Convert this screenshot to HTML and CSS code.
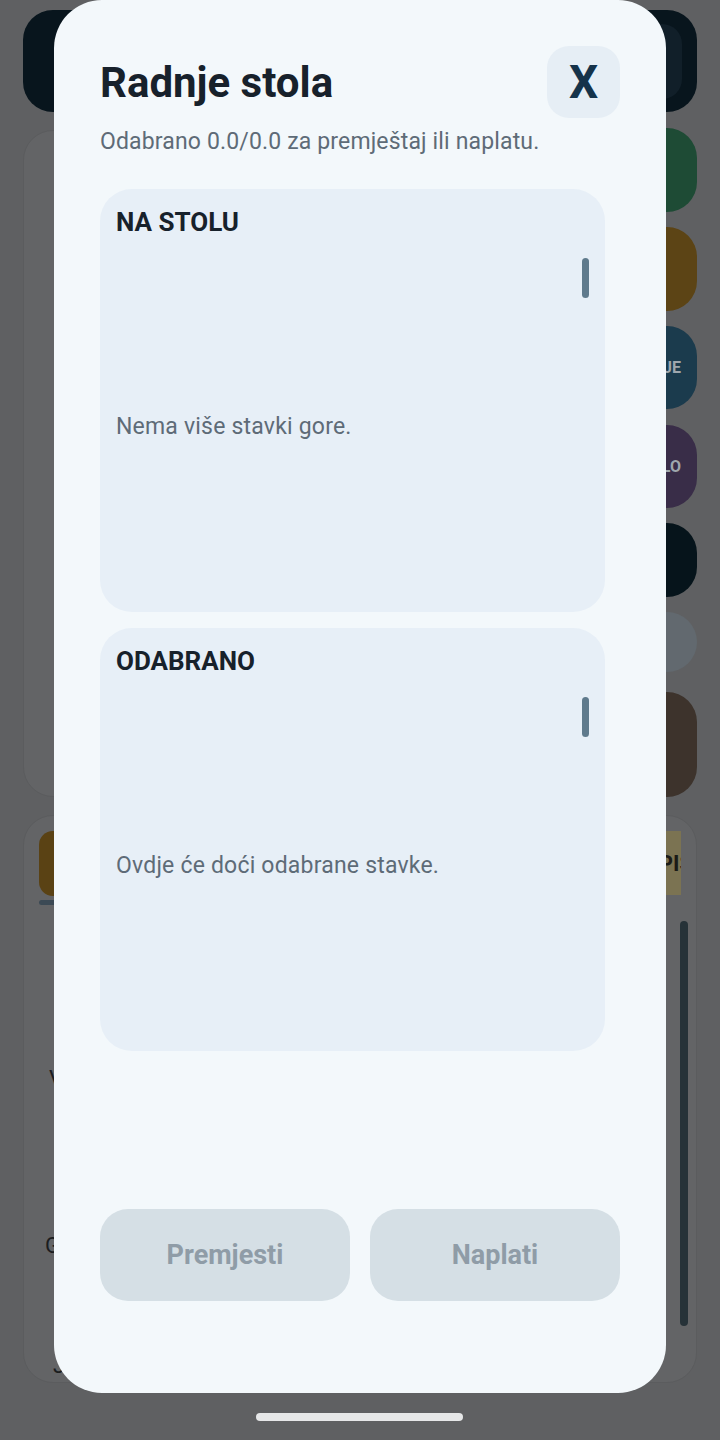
FILE: index.html
```html
<!DOCTYPE html>
<html lang="hr">
<head>
  <meta charset="UTF-8">
  <meta name="viewport" content="width=device-width, initial-scale=1.0">
  <title>Radnje stola</title>
  <link rel="stylesheet" href="styles.css">
</head>
<body>
  <div class="app">
    <div class="topbar">
      <span class="topbar-title">Stol 4</span>
      <div class="topbar-btn"></div>
    </div>

    <div class="main">
      <div class="table-card"></div>
      <div class="actions">
        <div class="action green"></div>
        <div class="action amber"></div>
        <div class="action blue"><span>SPAJANJE</span></div>
        <div class="action purple"><span>NOVI STOLO</span></div>
        <div class="action dark short"></div>
        <div class="action round"></div>
        <div class="action brown tall"></div>
      </div>
    </div>

    <div class="order-card">
      <div class="tabs">
        <div class="tab-active"></div>
        <div class="tab-print"><span>ISPIS</span></div>
      </div>
      <div class="tab-line"></div>
      <div class="rows">
        <div class="row r1">Voda 0.5</div>
        <div class="row r2">Gemišt</div>
        <div class="row r3">Jana</div>
      </div>
      <div class="order-scroll"></div>
    </div>
  </div>

  <div class="sheet">
    <div class="sheet-head">
      <h1>Radnje stola</h1>
      <button class="close-btn">X</button>
    </div>
    <p class="sheet-sub">Odabrano 0.0/0.0 za premještaj ili naplatu.</p>

    <div class="panel">
      <div class="panel-title">NA STOLU</div>
      <div class="panel-body">
        <div class="thumb"></div>
        <span class="empty">Nema više stavki gore.</span>
      </div>
    </div>

    <div class="panel">
      <div class="panel-title">ODABRANO</div>
      <div class="panel-body">
        <div class="thumb"></div>
        <span class="empty">Ovdje će doći odabrane stavke.</span>
      </div>
    </div>

    <div class="sheet-actions">
      <button class="sheet-btn" disabled>Premjesti</button>
      <button class="sheet-btn" disabled>Naplati</button>
    </div>
  </div>

  <div class="nav-pill"></div>
</body>
</html>
```

FILE: styles.css
```css
body {
  margin: 0;
  width: 720px;
  height: 1440px;
  overflow: hidden;
  position: relative;
  background: #5f6062;
  font-family: Roboto, 'Noto Sans', sans-serif;
}

/* app under the dimmed backdrop */
.app {
  padding: 10px 23px 0;
}

.topbar {
  height: 102px;
  border-radius: 30px;
  background: #08151d;
  display: flex;
  align-items: center;
  justify-content: space-between;
  padding: 0 15px 0 32px;
}

.topbar-title {
  color: #1c2a33;
  font-size: 26px;
  font-weight: 700;
}

.topbar-btn {
  width: 40px;
  height: 75px;
  border-radius: 20px;
  background: #111f29;
}

.main {
  display: flex;
  gap: 15px;
  margin-top: 16px;
}

.table-card {
  flex: 1;
  height: 665px;
  margin-top: 2px;
  border-radius: 30px;
  background: #636466;
  border: 1px solid #5b5c5e;
}

.actions {
  width: 130px;
  display: flex;
  flex-direction: column;
  gap: 15px;
}

.action {
  height: 84px;
  border-radius: 30px;
  display: flex;
  align-items: center;
  justify-content: flex-end;
  padding-right: 16px;
  overflow: hidden;
  white-space: nowrap;
  color: #9fa7ad;
  font-size: 16px;
  font-weight: 700;
}

.green { background: #1e4b35; }
.amber { background: #5c4415; }
.blue { background: #1b3b4d; height: 83px; }
.purple { background: #392d48; height: 83px; margin-top: 1px; }
.dark { background: #06141b; }
.short { height: 74px; }
.round {
  width: 60px;
  height: 60px;
  padding: 0;
  align-self: flex-end;
  border-radius: 50%;
  background: #62696f;
}
.brown { background: #3d332c; margin-top: 5px; }
.tall { height: 105px; }

.order-card {
  position: relative;
  height: 568px;
  box-sizing: border-box;
  margin-top: 18px;
  padding: 15px;
  border-radius: 30px;
  background: #636466;
  border: 1px solid #5b5c5e;
}

.tabs {
  display: flex;
  justify-content: space-between;
}

.tab-active {
  width: 200px;
  height: 65px;
  border-radius: 14px;
  background: #5a4214;
}

.tab-print {
  width: 110px;
  height: 64px;
  background: #7b7352;
  display: flex;
  align-items: center;
  justify-content: flex-end;
  overflow: hidden;
}

.tab-print span {
  color: #1b1b17;
  font-size: 22px;
  font-weight: 700;
  margin-right: -12px;
}

.tab-line {
  width: 200px;
  height: 5px;
  margin-top: 4px;
  border-radius: 3px;
  background: #3c4a55;
}

.rows {
  padding-left: 10px;
  color: #1b1d1f;
  font-size: 22px;
}

.row { height: 30px; line-height: 30px; }
.r1 { margin-top: 159px; }
.r2 { margin-top: 137px; margin-left: -4px; }
.r3 { margin-top: 90px; margin-left: 4px; }

.order-scroll {
  position: absolute;
  right: 8px;
  top: 105px;
  width: 8px;
  height: 405px;
  border-radius: 4px;
  background: #263238;
}

/* dialog */
.sheet {
  position: absolute;
  top: 0;
  left: 54px;
  width: 612px;
  height: 1393px;
  box-sizing: border-box;
  padding: 46px 46px 92px;
  border-radius: 48px;
  background: #f3f8fb;
  display: flex;
  flex-direction: column;
}

.sheet-head {
  display: flex;
  align-items: center;
  justify-content: space-between;
  height: 72px;
}

h1 {
  margin: 0;
  font-size: 42px;
  font-weight: 700;
  color: #17212b;
}

.close-btn {
  width: 73px;
  height: 72px;
  border: none;
  border-radius: 22px;
  background: #e6eef5;
  color: #15334a;
  font-family: inherit;
  font-size: 46px;
  font-weight: 700;
  padding: 0;
}

.sheet-sub {
  margin: 10px 0 33px;
  font-size: 23px;
  line-height: 28px;
  letter-spacing: 0.15px;
  color: #5e6b77;
}

.panel {
  height: 423px;
  box-sizing: border-box;
  margin-right: 15px;
  margin-bottom: 16px;
  padding: 18px 16px 6px;
  border-radius: 32px;
  background: #e7eff7;
  display: flex;
  flex-direction: column;
}

.panel-title {
  font-size: 26px;
  line-height: 30px;
  font-weight: 700;
  color: #17212b;
}

.panel-body {
  position: relative;
  flex: 1;
  margin-top: 10px;
  display: flex;
  align-items: center;
}

.thumb {
  position: absolute;
  top: 11px;
  right: 0;
  width: 7px;
  height: 40px;
  border-radius: 4px;
  background: #5f7a8c;
}

.empty {
  font-size: 23px;
  letter-spacing: 0.2px;
  color: #5e6b77;
}

.sheet-actions {
  margin-top: auto;
  display: flex;
  gap: 20px;
}

.sheet-btn {
  flex: 1;
  height: 92px;
  border: none;
  border-radius: 28px;
  background: #d5dfe5;
  color: #8f9ca7;
  font-family: inherit;
  font-size: 27px;
  font-weight: 700;
}

.nav-pill {
  position: absolute;
  left: 256px;
  top: 1413px;
  width: 207px;
  height: 8px;
  border-radius: 4px;
  background: #e6e7e8;
}
```
